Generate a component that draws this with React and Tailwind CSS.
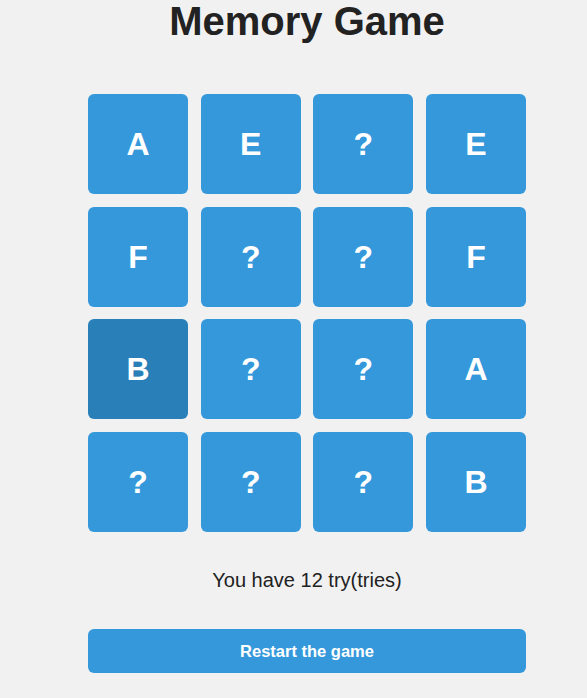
import React from 'react';

const cards = ['A', 'E', '?', 'E', 'F', '?', '?', 'F', 'B', '?', '?', 'A', '?', '?', '?', 'B'];

const App = () => {
  return (
    <div className="min-h-[698px] bg-[#f1f1f1] text-[#222] font-['Liberation_Sans',Arial,sans-serif]">
      <div className="ml-[88px] w-[438px] flex flex-col items-center">
        <h1 className="text-[40px] leading-[40px] font-bold pt-[1px] text-center">Memory Game</h1>
        <div className="mt-[53px] grid grid-cols-4 gap-[12.67px] w-full">
          {cards.map((c, i) => (
            <div
              key={i}
              className={`h-[100px] rounded-md flex items-center justify-center text-white text-[32px] font-bold ${i === 8 ? 'bg-[#2980b9]' : 'bg-[#3498db]'}`}
            >
              {c}
            </div>
          ))}
        </div>
        <p className="mt-[37px] text-[20px] leading-[23px]">You have 12 try(tries)</p>
        <button className="mt-[37px] w-full h-[44px] rounded-md bg-[#3498db] text-white font-bold text-[16.5px]">
          Restart the game
        </button>
      </div>
    </div>
  );
};

export default App;
